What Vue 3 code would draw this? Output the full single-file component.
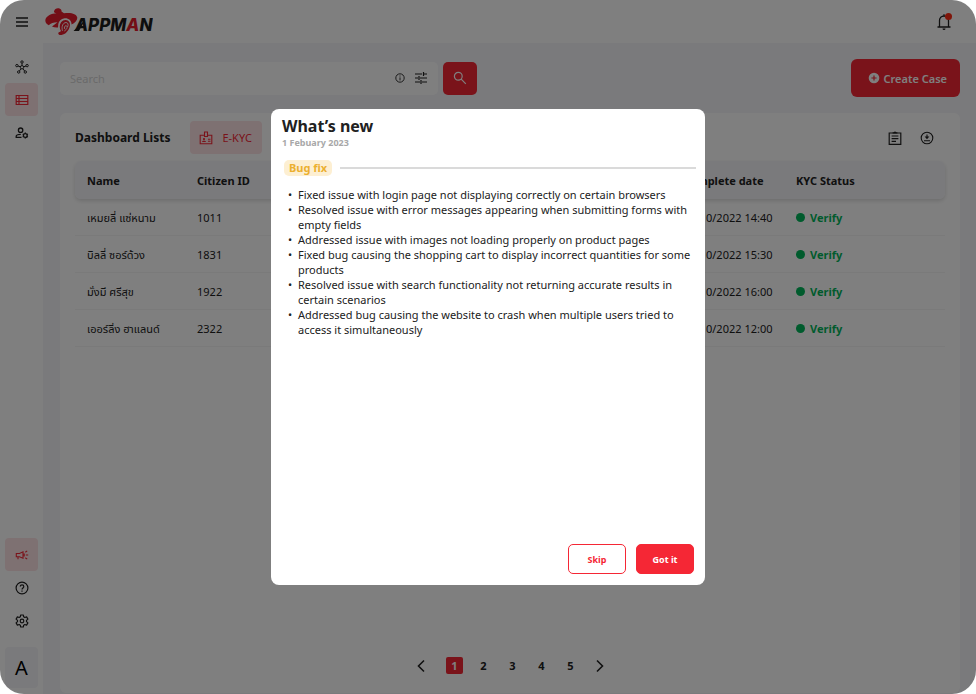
<script setup>
import { ref } from 'vue'

const search = ref('')
const page = ref(1)
const rows = [
  { name: 'เหมยลี่ แซ่หนาม', id: '1011', date: '12/10/2022 14:40' },
  { name: 'บิลลี่ ซอร์ด้วง', id: '1831', date: '12/10/2022 15:30' },
  { name: 'มั่งมี ศรีสุข', id: '1922', date: '12/10/2022 16:00' },
  { name: 'เออร์ลิ่ง ฮาแลนด์', id: '2322', date: '12/10/2022 12:00' },
]
const fixes = [
  'Fixed issue with login page not displaying correctly on certain browsers',
  'Resolved issue with error messages appearing when submitting forms with empty fields',
  'Addressed issue with images not loading properly on product pages',
  'Fixed bug causing the shopping cart to display incorrect quantities for some products',
  'Resolved issue with search functionality not returning accurate results in certain scenarios',
  'Addressed bug causing the website to crash when multiple users tried to access it simultaneously',
]
</script>

<template>
  <div class="app">
    <header class="topbar">
      <button class="icon-btn" type="button" aria-label="Menu">
        <svg width="14" height="14" viewBox="0 0 14 14" fill="none" stroke="currentColor" stroke-width="1.3">
          <path d="M1 3h12M1 7h12M1 11h12" />
        </svg>
      </button>
      <a class="logo" href="#" aria-label="Appman">
        <svg width="108" height="30" viewBox="0 0 108 30">
          <g fill="#e61c2c">
            <path d="M9 4.600C9.600 2 12 .8 14.500 1.600C16 2.200 16.800 3.200 16.500 4.500L19 6.300C26 5 31.500 7 32.200 10.300C32.700 13 30.500 15.800 26.500 17.500C26.800 13.500 23.500 10.800 19.500 11.200C16 11.600 13.800 14 13.300 17L13 20.500C10.500 20.700 8.500 20.300 7 19.600L12.500 15.200C8.500 15.200 5.500 16.300 3.800 18.300C1 17.200-.1 14.800.5 12.300C1.500 8.800 6.500 6.600 11.500 6.300C10 6 8.800 5.500 9 4.600Z" />
            <path d="M14.800 20.500C14.500 15.800 17.200 12.900 20.500 12.900C24 13 25.600 15.800 24.800 19.300C23.800 23.800 20.500 27.500 16.500 28C14.300 28.200 13 27.300 13.300 26C13.700 24.900 15.500 25 16 24C15.200 23 14.900 21.800 14.800 20.500Z" />
          </g>
          <path d="M17.500 23.800C16.200 19.500 18 15.600 21 15.500C23.300 15.500 23.600 18 22.500 20M19.300 24C22.800 22 22.800 18.500 20.800 18.700C19.500 19 19 20.800 19.800 22" fill="none" stroke="#fff" stroke-width=".9" />
          <path d="M28.500 24L40 13L34 24Z" fill="#1c1c1c" />
          <text class="wordmark" x="30" y="24">APPM<tspan class="red">A</tspan>N</text>
        </svg>
      </a>
      <button class="icon-btn bell" type="button" aria-label="Notifications">
        <svg width="16" height="18" viewBox="0 0 16 18" fill="none" stroke="currentColor" stroke-width="1.3">
          <path d="M1.500 14h13M3.500 14V7.500a4.500 4.500 0 0 1 9 0V14M8 3V1.200" />
          <path d="M6.500 15.400h3a1.500 1.500 0 0 1-3 0z" fill="currentColor" stroke="none" />
        </svg>
        <span class="dot"></span>
      </button>
    </header>

    <div class="body">
      <nav class="sidebar" aria-label="Main">
        <button class="side" type="button" aria-label="Network">
          <svg width="14" height="14" viewBox="0 0 14 14" fill="none" stroke="currentColor" stroke-width="1">
            <circle cx="7" cy="7.300" r="1.700" /><circle cx="7" cy="2" r="1.200" /><circle cx="1.900" cy="5.600" r="1.200" />
            <circle cx="12.100" cy="5.600" r="1.200" /><circle cx="3.700" cy="12" r="1.200" /><circle cx="10.300" cy="12" r="1.200" />
            <path d="M7 3.200v2.400M3 6l2.300.800M11 6l-2.300.800M4.400 11l1.600-2.300M9.600 11L8 8.700" />
          </svg>
        </button>
        <button class="side active" type="button" aria-label="Lists">
          <svg width="14" height="14" viewBox="0 0 14 14" fill="none" stroke="currentColor" stroke-width="1.200">
            <path d="M1.200 2.500h11.600v9H1.200zM1.200 5.500h11.600M1.200 8.500h11.600M4 2.500v9" />
          </svg>
        </button>
        <button class="side" type="button" aria-label="Manage accounts">
          <svg width="14" height="14" viewBox="0 0 14 14" fill="none" stroke="currentColor" stroke-width="1.300">
            <circle cx="5.600" cy="4.200" r="2.200" />
            <path d="M6.500 11.400H1.200V10.300c0-1.300 2.200-2 4.600-2" />
            <circle cx="10.300" cy="9.500" r="1.900" />
            <path d="M10.300 6.500v1M10.300 11.500v1M7.700 8l.900.500M12 10.500l.900.500M7.700 11l.900-.500M12 8.500l.900-.500" />
          </svg>
        </button>
        <span class="spacer"></span>
        <button class="side active" type="button" aria-label="What’s new">
          <svg width="14" height="14" viewBox="0 0 14 14" fill="none" stroke="currentColor" stroke-width="1.100">
            <path d="M1.300 5.500h3.200L8 3.800v6.400L4.500 8.700H1.300zM3 8.700V11.200M10.800 7h2.400M10.300 4.300l1.900-1.400M10.300 9.700l1.900 1.400M9.200 5.500v3" />
          </svg>
        </button>
        <button class="side" type="button" aria-label="Help">
          <svg width="14" height="14" viewBox="0 0 14 14" fill="none" stroke="currentColor" stroke-width="1.200">
            <circle cx="7" cy="7" r="5.900" />
            <path d="M5.300 5.600C5.300 3.300 8.800 3.400 8.800 5.500C8.800 6.900 7 7 7 8.600M7 9.600v1.200" />
          </svg>
        </button>
        <button class="side" type="button" aria-label="Settings">
          <svg width="14" height="14" viewBox="0 0 14 14" fill="none" stroke="currentColor" stroke-width="1.200" stroke-linejoin="round">
            <circle cx="7" cy="7" r="1.800" />
            <path d="M5.700 1h2.600l.4 1.800 1.100.7 1.800-.600 1.300 2.200-1.400 1.300v1.200l1.400 1.300-1.300 2.200-1.800-.600-1.100.7-.4 1.800H5.700l-.4-1.800-1.100-.700-1.800.600-1.300-2.200 1.400-1.300V6.400L1.100 5.100l1.300-2.200 1.800.600 1.100-.700z" />
          </svg>
        </button>
        <button class="avatar" type="button">A</button>
      </nav>

      <main class="main">
        <div class="toolbar">
          <form class="search" @submit.prevent>
            <div class="field">
              <input v-model="search" type="text" placeholder="Search" aria-label="Search" />
              <svg class="info" width="10" height="10" viewBox="0 0 10 10" fill="none" stroke="currentColor" stroke-width=".9">
                <circle cx="5" cy="5" r="4.200" /><path d="M5 4.400v3M5 2.500v1" />
              </svg>
              <button class="filter" type="button" aria-label="Filters">
                <svg width="14" height="14" viewBox="0 0 14 14" fill="none" stroke="currentColor" stroke-width="1.200">
                  <path d="M1 3h7M10 3h3M9.500 1v4M1 7h3M6 7h7M5 5v4M1 11h5M8 11h5M7 9v4" />
                </svg>
              </button>
            </div>
            <button class="go" type="submit" aria-label="Run search">
              <svg width="14" height="14" viewBox="0 0 14 14" fill="none" stroke="currentColor" stroke-width="1.200">
                <circle cx="5.300" cy="5.300" r="3.900" /><path d="M8.200 8.200l4.600 4.600" />
              </svg>
            </button>
          </form>
          <button class="create" type="button">
            <svg width="12" height="12" viewBox="0 0 12 12">
              <circle cx="6" cy="6" r="5.300" fill="currentColor" />
              <path d="M6 3.400v5.200M3.400 6h5.200" stroke="#f52735" stroke-width="1.200" />
            </svg>
            Create Case
          </button>
        </div>

        <section class="card">
          <div class="card-head">
            <h1>Dashboard Lists</h1>
            <button class="tab" type="button">
              <svg width="14" height="14" viewBox="0 0 14 14" fill="none" stroke="currentColor" stroke-width="1.100">
                <path d="M5.500 4.200H1.200v8.600h11.600V4.200H8.500M5.500 1h3v4.500h-3z" />
                <path d="M9 8.200h2.500M9 10.300h2.500" />
                <path d="M3 11c0-1.800 4-1.800 4 0zM5 7a1.100 1.100 0 1 1 0 2.200A1.100 1.100 0 0 1 5 7z" fill="currentColor" stroke="none" />
              </svg>
              E-KYC
            </button>
            <span class="spacer"></span>
            <button class="tool" type="button" aria-label="Report">
              <svg width="14" height="16" viewBox="0 0 14 16" fill="none" stroke="currentColor" stroke-width="1.200">
                <path d="M1.200 3h11.600v11.400H1.200zM3.600 6h6.800M3.600 8.700h6.800M3.600 11.400h4.400" />
                <path d="M4.600 3.400V2.200h1.200a1.300 1.300 0 0 1 2.400 0h1.200v1.200z" fill="currentColor" stroke="none" />
              </svg>
            </button>
            <button class="tool" type="button" aria-label="Download">
              <svg width="14" height="14" viewBox="0 0 14 14" fill="none" stroke="currentColor" stroke-width="1.100">
                <circle cx="7" cy="7" r="5.800" /><path d="M4 9.700h6M7 3.500v3" />
                <path d="M4.600 5.600h4.800L7 8.200z" fill="currentColor" stroke="none" />
              </svg>
            </button>
          </div>

          <table>
            <colgroup><col class="c-name" /><col class="c-id" /><col class="c-date" /><col /></colgroup>
            <thead>
              <tr><th>Name</th><th>Citizen ID</th><th>Complete date</th><th>KYC Status</th></tr>
            </thead>
            <tbody>
              <tr v-for="r in rows" :key="r.id">
                <td>{{ r.name }}</td>
                <td>{{ r.id }}</td>
                <td>{{ r.date }}</td>
                <td><span class="status">Verify</span></td>
              </tr>
            </tbody>
          </table>

          <nav class="pager" aria-label="Pages">
            <button class="prev" type="button" aria-label="Previous page">
              <svg width="8" height="14" viewBox="0 0 8 14" fill="none" stroke="currentColor" stroke-width="1.600"><path d="M7 1.500L1.500 7L7 12.500" /></svg>
            </button>
            <button v-for="n in 5" :key="n" type="button" :class="{ current: n === page }" @click="page = n">{{ n }}</button>
            <button type="button" aria-label="Next page">
              <svg width="8" height="14" viewBox="0 0 8 14" fill="none" stroke="currentColor" stroke-width="1.600"><path d="M1 1.500L6.500 7L1 12.500" /></svg>
            </button>
          </nav>
        </section>
      </main>
    </div>

    <div class="overlay">
      <div class="dialog" role="dialog" aria-modal="true" aria-labelledby="news-title">
        <h2 id="news-title">What’s new</h2>
        <p class="date">1 Febuary 2023</p>
        <div class="divider"><span class="tag">Bug fix</span></div>
        <ul>
          <li v-for="f in fixes" :key="f">{{ f }}</li>
        </ul>
        <div class="actions">
          <button class="btn" type="button">Skip</button>
          <button class="btn primary" type="button">Got it</button>
        </div>
      </div>
    </div>
  </div>
</template>

<style>
body {
  margin: 0;
  background: #fff;
}
</style>

<style scoped>
* {
  box-sizing: border-box;
}
.app {
  position: relative;
  display: flex;
  flex-direction: column;
  min-height: 100vh;
  overflow: hidden;
  border-radius: 24px;
  background: #fff;
  color: #212121;
  font-family: "Noto Sans", "Noto Sans Thai", "DejaVu Sans", sans-serif;
  font-size: 11px;
  line-height: 15px;
}
button {
  display: flex;
  align-items: center;
  justify-content: center;
  padding: 0;
  border: 0;
  background: none;
  color: inherit;
  font: inherit;
  cursor: pointer;
}
.spacer {
  flex: 1;
}
.topbar {
  display: flex;
  align-items: center;
  height: 43px;
  padding: 0 16px 0 5px;
}
.icon-btn {
  width: 33px;
  height: 33px;
}
.logo {
  display: flex;
  margin-left: 7px;
}
.wordmark {
  fill: #1c1c1c;
  font-family: Inter, Roboto, sans-serif;
  font-size: 17px;
  font-style: italic;
  font-weight: 800;
}
.wordmark .red {
  fill: #e61c2c;
}
.bell {
  position: relative;
  margin-left: auto;
}
.dot {
  position: absolute;
  top: 8px;
  right: 8px;
  width: 7px;
  height: 7px;
  border-radius: 50%;
  background: #ff2a12;
}
.body {
  display: flex;
  flex: 1;
}
.sidebar {
  display: flex;
  flex-direction: column;
  align-items: center;
  width: 43px;
  padding: 7px 5px 6px;
}
.side {
  width: 33px;
  height: 33px;
  border-radius: 4px;
}
.side.active,
.tab {
  background: #fde2e5;
  color: #f52735;
}
.avatar {
  width: 33px;
  height: 41px;
  margin-top: 10px;
  border-radius: 4px;
  background: #f4f4f8;
  color: #000;
  font-size: 20px;
}
.main {
  display: flex;
  flex: 1;
  flex-direction: column;
  gap: 16px;
  min-width: 0;
  padding: 16px 16px 1px 17px;
  background: #f4f4f8;
}
.toolbar {
  display: flex;
  align-items: center;
  justify-content: space-between;
}
.search {
  display: flex;
  gap: 5px;
  width: 417px;
}
.field {
  display: flex;
  flex: 1;
  align-items: center;
  gap: 9px;
  height: 33px;
  padding: 0 10px;
  border-radius: 5px;
  background: #fff;
}
.field input {
  flex: 1;
  min-width: 0;
  padding: 0;
  border: 0;
  outline: 0;
  background: none;
  color: inherit;
  font: inherit;
}
.field input::placeholder {
  color: #d4d4d4;
  opacity: 1;
}
.go {
  width: 34px;
  height: 33px;
  border-radius: 5px;
  background: #f52735;
  color: #fff;
}
.create {
  gap: 3px;
  height: 38px;
  padding: 0 13px 0 17px;
  border-radius: 6px;
  background: #f52735;
  color: #fff;
  font-weight: 600;
}
.card {
  display: flex;
  flex: 1;
  flex-direction: column;
  padding: 8px 15px 19px;
  border-radius: 6px;
  background: #fff;
}
.card-head {
  display: flex;
  align-items: center;
  gap: 16px;
  height: 33px;
  padding-right: 10px;
  margin-bottom: 7px;
}
h1 {
  margin: 0 4px 0 0;
  font-size: 12px;
  font-weight: 700;
}
.tab {
  gap: 9px;
  height: 33px;
  padding: 0 10px 0 9px;
  border-radius: 4px;
}
.tool {
  width: 16px;
  height: 16px;
}
table {
  width: 100%;
  border-spacing: 0;
  table-layout: fixed;
}
.c-name {
  width: 110px;
}
.c-id {
  width: 486px;
}
.c-date {
  width: 113px;
}
th,
td {
  padding: 0 0 0 12px;
  text-align: left;
  white-space: nowrap;
}
th {
  height: 38px;
  background: #f4f4f8;
  font-weight: 700;
}
thead tr {
  border-radius: 6px;
  box-shadow: 0 2px 4px rgba(0, 0, 0, 0.14);
}
th:first-child {
  border-radius: 6px 0 0 6px;
}
th:last-child {
  border-radius: 0 6px 6px 0;
}
td {
  height: 37px;
  border-bottom: 1px solid #f4f4f4;
}
.status {
  display: flex;
  align-items: center;
  gap: 5px;
  color: #00b65a;
  font-weight: 700;
}
.status::before {
  width: 9px;
  height: 9px;
  border-radius: 50%;
  background: currentColor;
  content: "";
}
.pager {
  display: flex;
  justify-content: center;
  gap: 12px;
  margin-top: auto;
}
.pager button {
  width: 17px;
  height: 17px;
  border-radius: 2px;
  font-weight: 700;
}
.pager .prev {
  margin-right: 5px;
}
.pager .current {
  background: #f52735;
  color: #fff;
}
.overlay {
  position: absolute;
  inset: 0;
  display: flex;
  align-items: center;
  justify-content: center;
  background: rgba(0, 0, 0, 0.5);
}
.dialog {
  display: flex;
  flex-direction: column;
  width: 434px;
  min-height: 476px;
  padding: 6px 11px 11px;
  border-radius: 8px;
  background: #fff;
}
h2 {
  margin: 0;
  font-size: 16px;
  font-weight: 700;
  line-height: 22px;
}
.date {
  margin: 0;
  color: #a8a8a8;
  font-size: 9px;
  font-weight: 700;
  line-height: 12px;
}
.divider {
  display: flex;
  align-items: center;
  gap: 8px;
  margin: 11px -2px 11px 2px;
}
.divider::after {
  flex: 1;
  height: 2px;
  background: #dadada;
  content: "";
}
.tag {
  padding: 0 5px;
  border-radius: 5px;
  background: #fdefd2;
  color: #ecb02f;
  font-weight: 700;
  line-height: 16px;
}
ul {
  flex: 1;
  margin: 0;
  padding: 0 0 0 16px;
  list-style: none;
}
li::before {
  float: left;
  margin-left: -10px;
  content: "•";
}
.actions {
  display: flex;
  justify-content: flex-end;
  gap: 10px;
}
.btn {
  width: 58px;
  height: 30px;
  border: 1px solid #f52735;
  border-radius: 5px;
  color: #f52735;
  font-size: 9px;
  font-weight: 700;
}
.btn.primary {
  background: #f52735;
  color: #fff;
}
</style>
